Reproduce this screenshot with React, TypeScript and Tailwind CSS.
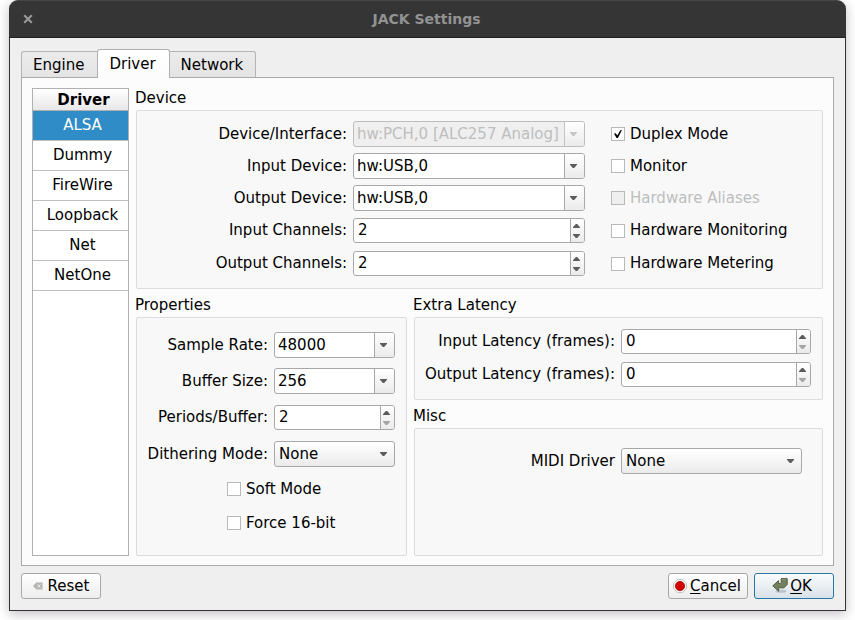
import { useId, useState, type ReactNode } from "react";
import clsx from "clsx";

function DownArrow({ dim = false }: { dim?: boolean }) {
  return (
    <svg width="7" height="4" viewBox="0 0 7 4" className={dim ? "fill-[#c6c6c6]" : "fill-[#5c5c5c]"} aria-hidden="true">
      <path d="M0 0H7V0.8L4.2 4H2.8L0 0.8Z" />
    </svg>
  );
}

function UpArrow() {
  return (
    <svg width="7" height="4" viewBox="0 0 7 4" className="fill-[#5c5c5c]" aria-hidden="true">
      <path d="M0 4H7V3.2L4.2 0H2.8L0 3.2Z" />
    </svg>
  );
}

type FieldProps = { label: string; children: (id: string) => ReactNode };

function Field({ label, children }: FieldProps) {
  const id = useId();
  return (
    <>
      <label htmlFor={id} className="text-right whitespace-nowrap">
        {label}
      </label>
      {children(id)}
    </>
  );
}

type ComboProps = { id: string; options: string[]; split?: boolean; disabled?: boolean };

function Combo({ id, options, split = false, disabled = false }: ComboProps) {
  return (
    <div
      className={clsx(
        "relative flex h-[26px] overflow-hidden rounded-[3px] border",
        disabled ? "border-[#bdbdbd]" : "border-[#a8a8a8]",
        split ? (disabled ? "bg-[#efefef]" : "bg-white") : "bg-linear-to-b from-white to-[#ebebeb]",
      )}
    >
      <select
        id={id}
        disabled={disabled}
        className={clsx(
          "min-w-0 flex-1 appearance-none bg-transparent pr-5 outline-none disabled:text-[#bebebe] disabled:opacity-100",
          split ? "pl-[3px]" : "pl-1",
        )}
      >
        {options.map((option) => (
          <option key={option}>{option}</option>
        ))}
      </select>
      <span
        className={clsx(
          "pointer-events-none absolute inset-y-0 right-0 flex w-5 items-center justify-center",
          split ? "border-l bg-linear-to-b from-white to-[#ebebeb] pr-[2px]" : "pr-px",
          disabled ? "border-[#c4c4c4]" : "border-[#a8a8a8]",
        )}
      >
        <DownArrow dim={disabled} />
      </span>
    </div>
  );
}

function Spin({ id, value, min }: { id: string; value: number; min: number }) {
  const [current, setCurrent] = useState(value);
  return (
    <div className="my-px flex h-[25px] overflow-hidden rounded-[3px] border border-[#a8a8a8] bg-white">
      <input
        id={id}
        type="number"
        min={min}
        value={current}
        onChange={(event) => setCurrent(Number(event.target.value))}
        className="w-0 min-w-0 flex-1 [appearance:textfield] pl-1 outline-none [&::-webkit-inner-spin-button]:appearance-none"
      />
      <div className="flex w-[14px] flex-col border-l border-[#a8a8a8] bg-linear-to-b from-white to-[#ebebeb] pr-[2px]">
        <button
          type="button"
          aria-label="Increase"
          onClick={() => setCurrent(current + 1)}
          className="flex flex-1 items-end justify-center pb-[3px]"
        >
          <UpArrow />
        </button>
        <button
          type="button"
          aria-label="Decrease"
          disabled={current <= min}
          onClick={() => setCurrent(current - 1)}
          className="flex flex-1 items-start justify-center pt-[3px] disabled:opacity-50"
        >
          <DownArrow />
        </button>
      </div>
    </div>
  );
}

type CheckProps = { label: string; checked?: boolean; disabled?: boolean; className?: string };

function Check({ label, checked = false, disabled = false, className }: CheckProps) {
  return (
    <label className={clsx("flex items-center gap-[5px] whitespace-nowrap", disabled && "text-[#bebebe]", className)}>
      <span className="grid size-[14px] shrink-0">
        <input
          type="checkbox"
          defaultChecked={checked}
          disabled={disabled}
          className="peer size-[14px] appearance-none border border-[#b9b9b9] bg-white [grid-area:1/1] disabled:bg-[#efefef]"
        />
        <svg
          viewBox="0 0 14 14"
          className="pointer-events-none invisible size-[14px] [grid-area:1/1] peer-checked:visible"
          aria-hidden="true"
        >
          <path d="M3 6.8L4.8 6.2L6.2 8.6L9.4 3.2L11 3L6.9 11H5.6Z" fill="#000" />
        </svg>
      </span>
      {label}
    </label>
  );
}

function Group({ title, className, children }: { title: string; className: string; children: ReactNode }) {
  return (
    <fieldset className="flex min-w-0 flex-1 flex-col">
      <legend className="contents">
        <span className="-ml-px block h-[22px] leading-[21px]">{title}</span>
      </legend>
      <div className={clsx("grid flex-1 content-start items-center rounded-[2px] border border-[#dcdcdc] bg-[#f8f8f8]", className)}>
        {children}
      </div>
    </fieldset>
  );
}

const drivers = ["ALSA", "Dummy", "FireWire", "Loopback", "Net", "NetOne"];

function DriverTable() {
  const [selected, setSelected] = useState("ALSA");
  return (
    <div className="w-[97px] shrink-0 border border-[#b0b0b0] bg-white">
      <table className="w-full border-separate border-spacing-0 text-center">
        <thead>
          <tr>
            <th className="h-[22px] border-b border-[#b0b0b0] bg-linear-to-b from-white to-[#e8e8e8] p-0 pt-px pl-[6px] leading-[20px] font-bold">
              Driver
            </th>
          </tr>
        </thead>
        <tbody>
          {drivers.map((driver) => (
            <tr key={driver} onClick={() => setSelected(driver)}>
              <td
                className={clsx(
                  "h-[30px] border-b border-[#c0c0c0] p-0 pl-1",
                  driver === selected && "bg-[#308cc6] text-white",
                )}
              >
                {driver}
              </td>
            </tr>
          ))}
        </tbody>
      </table>
    </div>
  );
}

const buttonBase = "flex h-[26px] w-20 items-center justify-center rounded-[3px] border bg-linear-to-b";

export default function App() {
  return (
    <div className="bg-white px-[9px] pb-[9px] font-['DejaVu_Sans',sans-serif] text-[15px] leading-[19px] text-black">
      <main className="rounded-t-[9px] bg-[#efefef] shadow-[0_3px_12px_rgba(40,20,40,0.28)]">
        <header className="grid h-[38px] grid-cols-[38px_1fr_40px] items-center rounded-t-[9px] border-t border-b border-t-[#464646] border-b-[#202020] bg-[#353535] text-[#929292]">
          <button type="button" aria-label="Close" className="flex h-full items-center justify-center">
            <svg width="10" height="10" viewBox="0 0 10 10" fill="none" stroke="#989898" strokeWidth="2.2" aria-hidden="true">
              <path d="M1.2 1.2L8.8 8.8M8.8 1.2L1.2 8.8" />
            </svg>
          </button>
          <h1 className="text-center text-[14px] font-bold">JACK Settings</h1>
        </header>

        <div className="border border-t-0 border-[#333333] px-[11px] pt-[11px] pb-[11px]">
          <div role="tablist" className="flex items-end">
            <button
              type="button"
              role="tab"
              aria-selected="false"
              className="h-[26px] rounded-tl-[3px] border-t border-l border-[#b4b4b4] bg-linear-to-b from-[#ebebeb] to-[#e4e4e4] pt-px pr-[13px] pl-[11px]"
            >
              Engine
            </button>
            <button
              type="button"
              role="tab"
              aria-selected="true"
              className="relative -mb-px h-[29px] rounded-t-[3px] border border-b-0 border-[#b0b0b0] bg-linear-to-b from-white to-[#fcfcfc] pr-[13px] pl-[11px]"
            >
              Driver
            </button>
            <button
              type="button"
              role="tab"
              aria-selected="false"
              className="h-[26px] rounded-tr-[3px] border-t border-r border-[#b4b4b4] bg-linear-to-b from-[#ebebeb] to-[#e4e4e4] pt-px pr-[12px] pl-[11px]"
            >
              Network
            </button>
          </div>

          <section className="flex gap-[7px] border border-[#a9a9a9] bg-[#fcfcfc] px-[10px] pt-[10px] pb-[9px]">
            <DriverTable />
            <div className="flex min-w-0 flex-1 flex-col gap-[6px]">
              <Group title="Device" className="grid-cols-[1fr_232px_1fr] gap-x-0 gap-y-[6px] pt-[10px] pr-[21px] pb-[11px] [&>label:nth-child(3n+1)]:pr-[6px]">
                <Field label="Device/Interface:">
                  {(id) => <Combo id={id} split disabled options={["hw:PCH,0 [ALC257 Analog]"]} />}
                </Field>
                <Check label="Duplex Mode" checked className="pl-[26px]" />
                <Field label="Input Device:">{(id) => <Combo id={id} split options={["hw:USB,0"]} />}</Field>
                <Check label="Monitor" className="pl-[26px]" />
                <Field label="Output Device:">{(id) => <Combo id={id} split options={["hw:USB,0"]} />}</Field>
                <Check label="Hardware Aliases" disabled className="pl-[26px]" />
                <Field label="Input Channels:">{(id) => <Spin id={id} value={2} min={0} />}</Field>
                <Check label="Hardware Monitoring" className="pl-[26px]" />
                <Field label="Output Channels:">{(id) => <Spin id={id} value={2} min={0} />}</Field>
                <Check label="Hardware Metering" className="pl-[26px]" />
              </Group>

              <div className="grid flex-1 grid-cols-[271fr_409fr] gap-[7px]">
                <div className="flex flex-col">
                  <Group title="Properties" className="grid-cols-[1fr_121px] gap-x-[6px] gap-y-[10px] pt-[14px] pr-[11px] pb-5">
                    <Field label="Sample Rate:">{(id) => <Combo id={id} split options={["48000"]} />}</Field>
                    <Field label="Buffer Size:">{(id) => <Combo id={id} split options={["256"]} />}</Field>
                    <Field label="Periods/Buffer:">{(id) => <Spin id={id} value={2} min={2} />}</Field>
                    <Field label="Dithering Mode:">{(id) => <Combo id={id} options={["None"]} />}</Field>
                    <Check label="Soft Mode" className="col-span-2 h-6 pl-[90px]" />
                    <Check label="Force 16-bit" className="col-span-2 h-6 pl-[90px]" />
                  </Group>
                </div>
                <div className="flex flex-col gap-[6px]">
                  <div className="flex flex-col">
                    <Group title="Extra Latency" className="grid-cols-[1fr_190px] gap-[6px] pt-[10px] pr-[11px] pb-[11px]">
                      <Field label="Input Latency (frames):">{(id) => <Spin id={id} value={0} min={0} />}</Field>
                      <Field label="Output Latency (frames):">{(id) => <Spin id={id} value={0} min={0} />}</Field>
                    </Group>
                  </div>
                  <Group title="Misc" className="grid-cols-[1fr_181px] gap-[6px] pt-[19px] pr-5">
                    <Field label="MIDI Driver">{(id) => <Combo id={id} options={["None"]} />}</Field>
                  </Group>
                </div>
              </div>
            </div>
          </section>

          <footer className="flex gap-[6px] pt-[7px]">
            <button type="button" className={clsx(buttonBase, "mr-auto gap-[5px] border-[#a8a8a8] from-white to-[#ededed]")}>
              <svg width="10" height="8" viewBox="0 0 10 8" aria-hidden="true">
                <path d="M0 4L3.2 0.5H9.5V7.5H3.2Z" fill="#b4b6b0" />
                <path d="M4.6 2.4L7.4 5.6M7.4 2.4L4.6 5.6" stroke="#ededed" strokeWidth="0.9" />
              </svg>
              Reset
            </button>
            <button type="button" className={clsx(buttonBase, "gap-[3px] border-[#a8a8a8] from-white to-[#ededed] pr-[2px]")}>
              <svg width="14" height="14" viewBox="0 0 14 14" aria-hidden="true">
                <path d="M4.4 0.5H9.6L13.5 4.4V9.6L9.6 13.5H4.4L0.5 9.6V4.4Z" fill="#f4f4f2" stroke="#c2c4be" />
                <circle cx="7" cy="7" r="4.6" fill="#d40000" stroke="#a80000" strokeWidth="0.8" />
              </svg>
              <span>
                <span className="underline underline-offset-2">C</span>ancel
              </span>
            </button>
            <button type="button" className={clsx(buttonBase, "gap-[2px] border-[#2a76a8] from-[#fafcfd] to-[#d9e2e8] pr-1")}>
              <svg width="16" height="16" viewBox="0 0 16 16" aria-hidden="true">
                <ellipse cx="9" cy="13.2" rx="5.5" ry="1.6" fill="#000" opacity="0.16" />
                <path
                  d="M9.2 0.6H15.2V6.4L12 9.8H6.6V13.2L0.8 7.8L6.6 2.6V5.6H8L9.2 4.4Z"
                  fill="#72825f"
                  stroke="#46523a"
                  strokeWidth="0.9"
                  strokeLinejoin="round"
                />
                <path d="M10.2 1.6H14.2" fill="none" stroke="#93a181" strokeWidth="0.8" />
              </svg>
              <span>
                <span className="underline underline-offset-2">O</span>K
              </span>
            </button>
          </footer>
        </div>
      </main>
    </div>
  );
}
